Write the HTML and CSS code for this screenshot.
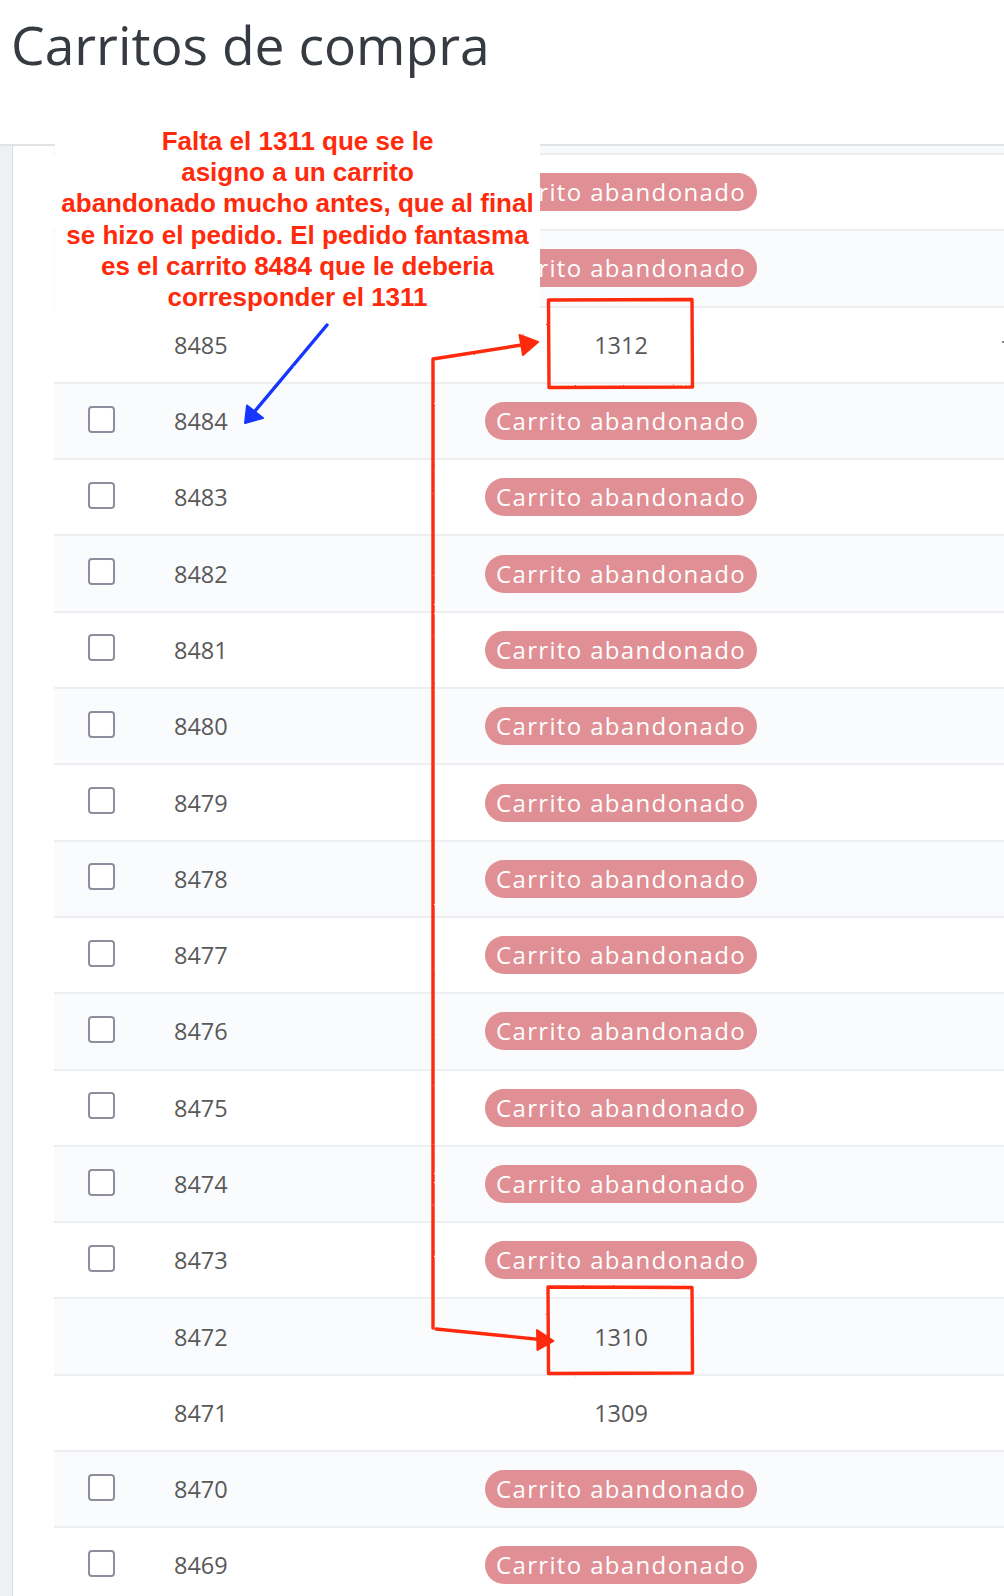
FILE: index.html
```html
<!DOCTYPE html>
<html lang="es">
<head>
<meta charset="utf-8">
<title>Carritos de compra</title>
<link rel="stylesheet" href="styles.css">
</head>
<body>
<h1 class="page-title">Carritos de compra</h1>

<div class="panel">
  <div class="panel-side"></div>
  <div class="panel-body">
    <div class="table">
      <div class="thead"></div>
      <div class="row"><div class="cell-check"></div><div class="cell-id"></div><div class="cell-status"><span class="badge">Carrito abandonado</span></div></div>
      <div class="row"><div class="cell-check"></div><div class="cell-id"></div><div class="cell-status"><span class="badge">Carrito abandonado</span></div></div>
      <div class="row"><div class="cell-check"></div><div class="cell-id">8485</div><div class="cell-status"><span class="order">1312</span></div><div class="cell-end"><span class="dot"></span></div></div>
      <div class="row"><div class="cell-check"><span class="checkbox"></span></div><div class="cell-id">8484</div><div class="cell-status"><span class="badge">Carrito abandonado</span></div></div>
      <div class="row"><div class="cell-check"><span class="checkbox"></span></div><div class="cell-id">8483</div><div class="cell-status"><span class="badge">Carrito abandonado</span></div></div>
      <div class="row"><div class="cell-check"><span class="checkbox"></span></div><div class="cell-id">8482</div><div class="cell-status"><span class="badge">Carrito abandonado</span></div></div>
      <div class="row"><div class="cell-check"><span class="checkbox"></span></div><div class="cell-id">8481</div><div class="cell-status"><span class="badge">Carrito abandonado</span></div></div>
      <div class="row"><div class="cell-check"><span class="checkbox"></span></div><div class="cell-id">8480</div><div class="cell-status"><span class="badge">Carrito abandonado</span></div></div>
      <div class="row"><div class="cell-check"><span class="checkbox"></span></div><div class="cell-id">8479</div><div class="cell-status"><span class="badge">Carrito abandonado</span></div></div>
      <div class="row"><div class="cell-check"><span class="checkbox"></span></div><div class="cell-id">8478</div><div class="cell-status"><span class="badge">Carrito abandonado</span></div></div>
      <div class="row"><div class="cell-check"><span class="checkbox"></span></div><div class="cell-id">8477</div><div class="cell-status"><span class="badge">Carrito abandonado</span></div></div>
      <div class="row"><div class="cell-check"><span class="checkbox"></span></div><div class="cell-id">8476</div><div class="cell-status"><span class="badge">Carrito abandonado</span></div></div>
      <div class="row"><div class="cell-check"><span class="checkbox"></span></div><div class="cell-id">8475</div><div class="cell-status"><span class="badge">Carrito abandonado</span></div></div>
      <div class="row"><div class="cell-check"><span class="checkbox"></span></div><div class="cell-id">8474</div><div class="cell-status"><span class="badge">Carrito abandonado</span></div></div>
      <div class="row"><div class="cell-check"><span class="checkbox"></span></div><div class="cell-id">8473</div><div class="cell-status"><span class="badge">Carrito abandonado</span></div></div>
      <div class="row"><div class="cell-check"></div><div class="cell-id">8472</div><div class="cell-status"><span class="order">1310</span></div></div>
      <div class="row"><div class="cell-check"></div><div class="cell-id">8471</div><div class="cell-status"><span class="order">1309</span></div></div>
      <div class="row"><div class="cell-check"><span class="checkbox"></span></div><div class="cell-id">8470</div><div class="cell-status"><span class="badge">Carrito abandonado</span></div></div>
      <div class="row"><div class="cell-check"><span class="checkbox"></span></div><div class="cell-id">8469</div><div class="cell-status"><span class="badge">Carrito abandonado</span></div></div>
    </div>
  </div>
</div>

<div class="note">Falta el 1311 que se le<br>asigno a un carrito<br>abandonado mucho antes, que al final<br>se hizo el pedido. El pedido fantasma<br>es el carrito 8484 que le deberia<br>corresponder el 1311</div>

<svg class="marks" width="1004" height="1596" viewBox="0 0 1004 1596" xmlns="http://www.w3.org/2000/svg">
  <defs>
    <filter id="rough" x="-5%" y="-5%" width="110%" height="110%">
      <feTurbulence type="fractalNoise" baseFrequency="0.9" numOctaves="1" seed="3" result="n"/>
      <feDisplacementMap in="SourceGraphic" in2="n" scale="1.8" xChannelSelector="R" yChannelSelector="G"/>
    </filter>
  </defs>
  <g filter="url(#rough)" fill="none" stroke="#ff2a0c" stroke-width="3.4" stroke-linejoin="round" stroke-linecap="round">
    <path d="M548.5 300 L692 299.5 L692.5 387 L549 387.5 Z"/>
    <path d="M548 1287 L692 1287.5 L692.5 1373 L548.5 1373.5 Z"/>
    <path d="M528 344 L433 359 L433 1328"/>
    <path d="M436 1329 L545 1340"/>
  </g>
  <g filter="url(#rough)" fill="#ff2a0c" stroke="#ff2a0c" stroke-width="2" stroke-linejoin="round">
    <path d="M538 342 L519.5 335 L523 355 Z"/>
    <path d="M553.5 1341 L537 1330 L537.5 1350 Z"/>
  </g>
  <g filter="url(#rough)" stroke="#1436ff" fill="#1436ff" stroke-linejoin="round" stroke-linecap="round">
    <path d="M327 325 L250 417" stroke-width="3.4" fill="none"/>
    <path d="M245 423 L247 405.5 L263 418 Z" stroke-width="2"/>
  </g>
</svg>
</body>
</html>
```

FILE: styles.css
```css
html, body {
  margin: 0;
  padding: 0;
  background: #ffffff;
}

body {
  position: relative;
  width: 1004px;
  height: 1596px;
  overflow: hidden;
  font-family: "Open Sans", "Noto Sans", sans-serif;
}

.page-title {
  margin: 0;
  padding: 9px 0 0 11px;
  font-size: 53.4px;
  line-height: 72px;
  font-weight: 400;
  color: #363a41;
}

.panel {
  display: flex;
  margin-top: 63px;
  border-top: 2px solid #e1e3e6;
}

.panel-side {
  width: 12px;
  flex: none;
  background: #eef0f2;
  border-right: 1px solid #d9dce0;
}

.panel-body {
  flex: 1;
  padding-left: 41px;
}

.thead {
  height: 7px;
  background: #f8f9fb;
  border-bottom: 2px solid #eaecef;
}

.row {
  display: grid;
  grid-template-columns: 120px 300px 294px 1fr;
  align-items: center;
  box-sizing: border-box;
  height: 76.3px;
  border-bottom: 2px solid #eceef1;
  background: #ffffff;
}

.row:nth-of-type(odd) {
  background: #fafbfd;
}

.cell-check {
  padding-left: 34px;
  display: flex;
  align-items: center;
  margin-top: -4px;
}

.checkbox {
  display: block;
  box-sizing: border-box;
  width: 27px;
  height: 27px;
  border: 2.5px solid #8f8e9f;
  border-radius: 4px;
  background: #ffffff;
}

.cell-id {
  font-size: 23.5px;
  color: #595959;
}

.cell-status {
  display: flex;
  justify-content: center;
}

.order {
  font-size: 23.5px;
  color: #595959;
}

.badge {
  display: inline-block;
  height: 38px;
  line-height: 38px;
  padding: 0 11px 0 11px;
  border-radius: 19px;
  background: #e08f95;
  color: #ffffff;
  font-size: 24px;
  letter-spacing: 1.35px;
  white-space: nowrap;
}

.cell-end {
  display: flex;
  justify-content: flex-end;
}

.dot {
  display: block;
  width: 2px;
  height: 2px;
  margin-top: -4px;
  background: #888888;
}

.note {
  position: absolute;
  left: 55px;
  top: 126px;
  width: 485px;
  height: 187px;
  background: #ffffff;
  text-align: center;
  font-family: "Liberation Sans", Arial, sans-serif;
  font-weight: 700;
  font-size: 26px;
  line-height: 31.2px;
  color: #ff2a0c;
}

.marks {
  position: absolute;
  left: 0;
  top: 0;
  pointer-events: none;
}
```
